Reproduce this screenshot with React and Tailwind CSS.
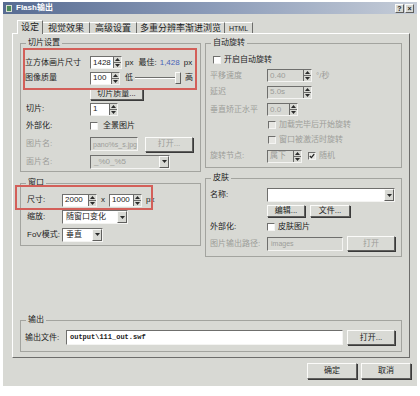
import React from "react";

const sunk = "border border-t-[#6f6f6d] border-l-[#6f6f6d] border-b-[#f4f4f2] border-r-[#f4f4f2]";
const raised = "border border-t-[#fbfbf9] border-l-[#fbfbf9] border-b-[#5f5f5d] border-r-[#5f5f5d]";
const txt = "text-[#1c1c1c]";
const dimTxt = "text-[#9c9d99]";

function Arrow({ up }) {
  return (
    <svg width="5" height="3" viewBox="0 0 5 3">
      <path d={up ? "M0 3L2.5 0L5 3Z" : "M0 0L2.5 3L5 0Z"} fill="#2a2a2a" />
    </svg>
  );
}

function Spin({ w, v, dis }) {
  return (
    <div className={`flex h-[13px] ${w} ${sunk} ${dis ? "bg-[#d8d9d4]" : "bg-white"}`}>
      <div className={`flex-1 flex items-center pl-[2px] overflow-hidden whitespace-nowrap ${dis ? dimTxt : txt}`}>{v}</div>
      <div className="w-[8px] flex flex-col border-l border-[#6a6a68] bg-[#d8d9d4]">
        <div className="flex-1 flex items-center justify-center border-b border-[#6a6a68]"><Arrow up /></div>
        <div className="flex-1 flex items-center justify-center"><Arrow /></div>
      </div>
    </div>
  );
}

function Combo({ w, v, dis, white }) {
  return (
    <div className={`flex h-[14px] ${w} ${sunk} ${dis ? "bg-[#d8d9d4]" : "bg-white"}`}>
      <div className={`flex-1 flex items-center pl-[3px] overflow-hidden whitespace-nowrap ${dis ? dimTxt : txt}`}>{v}</div>
      <div className={`w-[10px] flex items-center justify-center bg-[#d8d9d4] ${raised}`}><Arrow /></div>
    </div>
  );
}

function Btn({ w, h, children, dis }) {
  return (
    <div className={`${w} ${h} ${raised} shadow-[1px_1px_0_#3a3a3a] bg-[#d9dad5] flex items-center justify-center whitespace-nowrap ${dis ? dimTxt : txt}`}>
      {children}
    </div>
  );
}

function Chk({ checked, dis }) {
  return (
    <div className={`w-[8px] h-[8px] ${sunk} ${dis ? "bg-[#e6e6e2]" : "bg-white"} flex items-center justify-center shrink-0`}>
      {checked && (
        <svg width="6" height="6" viewBox="0 0 6 6">
          <path d="M0.8 3L2.4 4.6L5.2 1.2" stroke="#222" strokeWidth="1.3" fill="none" />
        </svg>
      )}
    </div>
  );
}

function Group({ title, className, children }) {
  return (
    <fieldset className={`min-w-0 border border-[#a3a49f] ${className}`}>
      <legend className={`ml-[5px] px-[2px] text-[8px] leading-[10px] ${txt}`}>{title}</legend>
      {children}
    </fieldset>
  );
}

export default function App() {
  return (
    <div className="w-[420px] h-[396px] bg-white pt-[2px] pl-[3px] font-['Liberation_Sans','Noto_Sans_CJK_SC',sans-serif] text-[8px] leading-none">
      <div className="w-[414px] h-[384px] bg-[#d8d9d4] flex flex-col">
        {/* title bar */}
        <div className="h-[12px] flex items-center px-[3px] bg-gradient-to-r from-[#586c92] via-[#8b9bb8] to-[#c6cdd8]">
          <div className="w-[6px] h-[7px] bg-[#4c8a5a] border border-[#d8e0d0]" />
          <span className="ml-[4px] text-white font-bold text-[8px]">Flash输出</span>
          <div className="ml-auto flex gap-[1px]">
            <div className={`w-[9px] h-[9px] ${raised} bg-[#d8d9d4] flex items-center justify-center text-[7px] font-bold text-[#222]`}>?</div>
            <div className={`w-[9px] h-[9px] ${raised} bg-[#d8d9d4] flex items-center justify-center text-[7px] font-bold text-[#222]`}>×</div>
          </div>
        </div>

        {/* tabs */}
        <div className="h-[19px] flex items-end pl-[14px]">
          <div className="relative z-10 w-[26px] h-[14px] -mb-[1px] bg-[#d8d9d4] border border-b-0 border-t-white border-l-white border-r-[#6d6d6b] flex items-center justify-center text-[9px] text-[#1c1c1c]">设定</div>
          <div className="w-[47px] h-[11px] border-t border-r border-t-white border-r-[#6d6d6b] flex items-center justify-center text-[9px] text-[#1c1c1c]">视觉效果</div>
          <div className="w-[47px] h-[11px] border-t border-r border-t-white border-r-[#6d6d6b] flex items-center justify-center text-[9px] text-[#1c1c1c]">高级设置</div>
          <div className="w-[88px] h-[11px] border-t border-r border-t-white border-r-[#6d6d6b] flex items-center justify-center text-[9px] text-[#1c1c1c] whitespace-nowrap">多重分辨率渐进浏览</div>
          <div className="w-[28px] h-[11px] border-t border-r border-t-white border-r-[#6d6d6b] flex items-center justify-center text-[7px] text-[#1c1c1c]">HTML</div>
        </div>

        {/* panel */}
        <div className="relative ml-[9px] w-[398px] h-[325px] border border-t-white border-l-white border-b-[#6d6d6b] border-r-[#6d6d6b] px-[7px] pt-[4px] flex flex-col">
          <div className="flex gap-[4px]">
            {/* left column */}
            <div className="w-[181px] flex flex-col gap-[6px]">
              <Group title="切片设置" className="w-[181px]">
                <div className="flex flex-col pt-[7px] pb-[1px]">
                  <div className="flex items-center h-[15px] pl-[4px]">
                    <div className={`w-[65px] ${txt}`}>立方体画片尺寸</div>
                    <Spin w="w-[32px]" v="1428" />
                    <span className={`ml-[3px] ${txt}`}>px</span>
                    <span className={`ml-[5px] ${txt}`}>最佳:</span>
                    <span className="ml-[3px] text-[#4a64b8]">1,428</span>
                    <span className={`ml-[4px] ${txt}`}>px</span>
                  </div>
                  <div className="flex items-center h-[16px] pl-[4px]">
                    <div className={`w-[65px] ${txt}`}>图像质量</div>
                    <Spin w="w-[30px]" v="100" />
                    <span className={`ml-[5px] ${txt}`}>低</span>
                    <div className="ml-[2px] w-[47px] flex items-center">
                      <div className="w-[40px] h-[2px] border-t border-t-[#6f6f6d] border-b border-b-white" />
                      <div className={`w-[6px] h-[12px] ${raised} bg-[#d8d9d4]`} />
                    </div>
                    <span className={`ml-[3px] ${txt}`}>高</span>
                  </div>
                  <div className="flex items-center h-[15px] pl-[69px]">
                    <Btn w="w-[53px]" h="h-[12px]">切片质量...</Btn>
                  </div>
                  <div className="flex items-center h-[16px] pl-[5px]">
                    <div className={`w-[64px] ${txt}`}>切片:</div>
                    <Spin w="w-[28px]" v="1" />
                  </div>
                  <div className="flex items-center h-[18px] pl-[5px]">
                    <div className={`w-[64px] ${txt}`}>外部化:</div>
                    <Chk />
                    <span className={`ml-[5px] ${txt}`}>全景图片</span>
                  </div>
                  <div className="flex items-center h-[18px] pl-[5px]">
                    <div className={`w-[64px] ${dimTxt}`}>图片名:</div>
                    <div className={`w-[48px] h-[14px] ${sunk} bg-[#d8d9d4] flex items-center pl-[2px] overflow-hidden whitespace-nowrap text-[7px] ${dimTxt}`}>pano%s_s.jpg</div>
                    <div className="ml-[7px]"><Btn w="w-[48px]" h="h-[15px]" dis>打开...</Btn></div>
                  </div>
                  <div className="flex items-center h-[17px] pl-[5px]">
                    <div className={`w-[64px] ${dimTxt}`}>面片名:</div>
                    <Combo w="w-[80px]" v="_%0_%5" dis />
                  </div>
                </div>
              </Group>

              <Group title="窗口" className="w-[181px]">
                <div className="flex flex-col pt-[4px] pb-[2px]">
                  <div className="flex items-center h-[16px] pl-[6px]">
                    <div className={`w-[35px] ${txt}`}>尺寸:</div>
                    <Spin w="w-[35px]" v="2000" />
                    <span className={`mx-[4px] ${txt}`}>x</span>
                    <Spin w="w-[33px]" v="1000" />
                    <span className={`ml-[4px] ${txt}`}>px</span>
                  </div>
                  <div className="flex items-center h-[18px] pl-[6px]">
                    <div className={`w-[35px] ${txt}`}>缩放:</div>
                    <Combo w="w-[66px]" v="随窗口变化" />
                  </div>
                  <div className="flex items-center h-[17px] pl-[6px]">
                    <div className={`w-[35px] ${txt}`}>FoV模式:</div>
                    <Combo w="w-[41px]" v="垂直" />
                  </div>
                </div>
              </Group>
            </div>

            {/* right column */}
            <div className="w-[197px] flex flex-col gap-[5px]">
              <Group title="自动旋转" className="w-[197px]">
                <div className="flex flex-col pt-[4px] pb-[3px]">
                  <div className="flex items-center h-[16px] pl-[7px]">
                    <Chk />
                    <span className={`ml-[3px] ${txt}`}>开启自动旋转</span>
                  </div>
                  <div className="flex items-center h-[15px] pl-[4px]">
                    <div className={`w-[57px] ${dimTxt}`}>平移速度</div>
                    <Spin w="w-[45px]" v="0.40" dis />
                    <span className={`ml-[4px] ${dimTxt}`}>°/秒</span>
                  </div>
                  <div className="flex items-center h-[18px] pl-[4px]">
                    <div className={`w-[57px] ${dimTxt}`}>延迟</div>
                    <Spin w="w-[45px]" v="5.0s" dis />
                  </div>
                  <div className="flex items-center h-[17px] pl-[4px]">
                    <div className={`w-[57px] ${dimTxt}`}>垂直矫正水平</div>
                    <Spin w="w-[31px]" v="0.0" dis />
                  </div>
                  <div className="flex items-center h-[14px] pl-[62px]">
                    <Chk dis />
                    <span className={`ml-[3px] ${dimTxt}`}>加载完毕后开始旋转</span>
                  </div>
                  <div className="flex items-center h-[16px] pl-[62px]">
                    <Chk dis />
                    <span className={`ml-[3px] ${dimTxt}`}>窗口被激活时旋转</span>
                  </div>
                  <div className="flex items-center h-[16px] pl-[4px]">
                    <div className={`w-[57px] ${dimTxt}`}>旋转节点:</div>
                    <Spin w="w-[35px]" v="属下" dis />
                    <div className="ml-[6px]"><Chk checked dis /></div>
                    <span className={`ml-[3px] ${dimTxt}`}>随机</span>
                  </div>
                </div>
              </Group>

              <Group title="皮肤" className="w-[197px]">
                <div className="flex flex-col pt-[4px] pb-[4px]">
                  <div className="flex items-center h-[16px] pl-[4px]">
                    <div className={`w-[57px] ${txt}`}>名称:</div>
                    <Combo w="w-[128px]" v="" />
                  </div>
                  <div className="flex items-center h-[16px] pl-[61px]">
                    <Btn w="w-[38px]" h="h-[12px]">编辑...</Btn>
                    <div className="ml-[5px]"><Btn w="w-[40px]" h="h-[12px]">文件...</Btn></div>
                  </div>
                  <div className="flex items-center h-[16px] pl-[4px]">
                    <div className={`w-[57px] ${txt}`}>外部化:</div>
                    <Chk />
                    <span className={`ml-[3px] ${txt}`}>皮肤图片</span>
                  </div>
                  <div className="flex items-center h-[17px] pl-[4px]">
                    <div className={`w-[57px] whitespace-nowrap ${dimTxt}`}>图片输出路径:</div>
                    <div className={`w-[76px] h-[14px] ${sunk} bg-[#d8d9d4] flex items-center pl-[3px] text-[7px] ${dimTxt}`}>images</div>
                    <div className="ml-[4px]"><Btn w="w-[48px]" h="h-[15px]" dis>打开</Btn></div>
                  </div>
                </div>
              </Group>
            </div>
          </div>

          {/* output */}
          <Group title="输出" className="w-[382px] mt-auto mb-[5px]">
            <div className="flex items-center h-[17px] pl-[4px] mt-[4px] mb-[5px]">
              <div className={`w-[41px] ${txt}`}>输出文件:</div>
              <div className={`w-[277px] h-[15px] ${sunk} bg-white flex items-center pl-[3px] text-[7px] font-['Liberation_Mono',monospace] font-bold ${txt}`}>output\111_out.swf</div>
              <div className="ml-[4px]"><Btn w="w-[48px]" h="h-[15px]">打开...</Btn></div>
            </div>
          </Group>

          {/* red highlight annotations */}
          <div className="absolute left-[10px] top-[14px] w-[174px] h-[42px] border-2 border-[#d35f59] pointer-events-none" />
          <div className="absolute left-[2px] top-[151px] w-[138px] h-[25px] border-2 border-[#d35f59] pointer-events-none" />
        </div>

        {/* buttons */}
        <div className="flex justify-end gap-[4px] mt-[5px] pr-[6px]">
          <Btn w="w-[50px]" h="h-[16px]">确定</Btn>
          <Btn w="w-[50px]" h="h-[16px]">取消</Btn>
        </div>
      </div>
    </div>
  );
}
